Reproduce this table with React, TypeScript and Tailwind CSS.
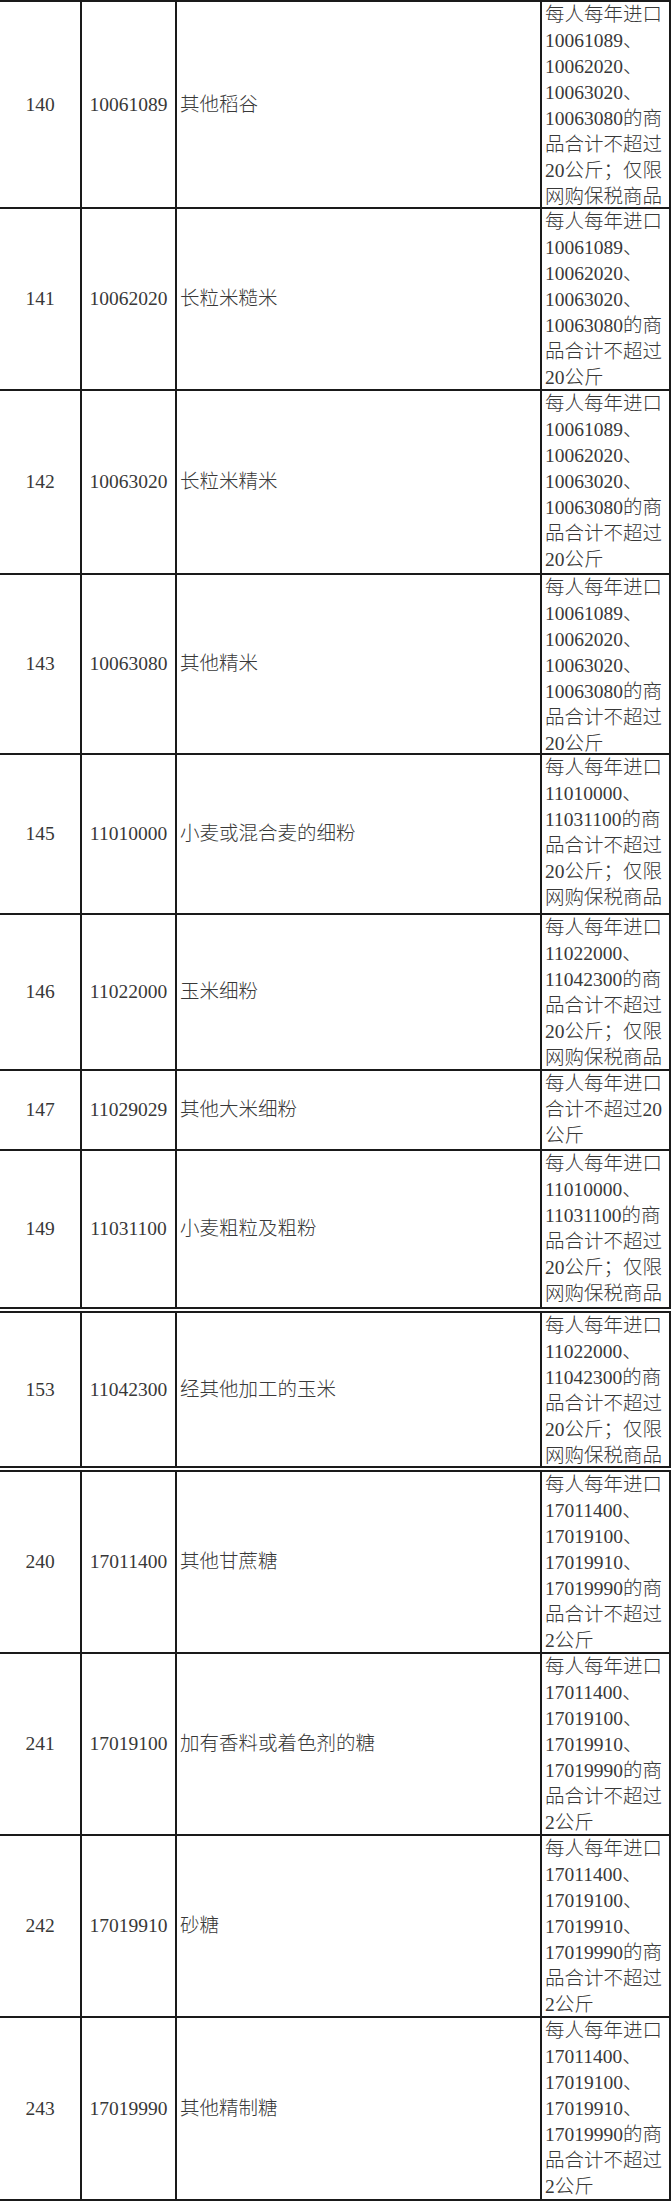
const limit20 = (codes: string[], last: string, tail: string[]) => [
  '每人每年进口',
  ...codes.map((c) => c + '、'),
  last + '的商',
  '品合计不超过',
  ...tail,
];

const rice = ['10061089', '10062020', '10063020'];
const flour1 = ['11010000'];
const flour2 = ['11022000'];
const sugar = ['17011400', '17019100', '17019910'];

type Row = {
  no: string;
  code: string;
  name: string;
  note: string[];
  h: string;
  double?: boolean;
};

const rows: Row[] = [
  { no: '140', code: '10061089', name: '其他稻谷', note: limit20(rice, '10063080', ['20公斤；仅限', '网购保税商品']), h: 'h-[207px]' },
  { no: '141', code: '10062020', name: '长粒米糙米', note: limit20(rice, '10063080', ['20公斤']), h: 'h-[182px]' },
  { no: '142', code: '10063020', name: '长粒米精米', note: limit20(rice, '10063080', ['20公斤']), h: 'h-[184px]' },
  { no: '143', code: '10063080', name: '其他精米', note: limit20(rice, '10063080', ['20公斤']), h: 'h-[180px]' },
  { no: '145', code: '11010000', name: '小麦或混合麦的细粉', note: limit20(flour1, '11031100', ['20公斤；仅限', '网购保税商品']), h: 'h-[160px]' },
  { no: '146', code: '11022000', name: '玉米细粉', note: limit20(flour2, '11042300', ['20公斤；仅限', '网购保税商品']), h: 'h-[156px]' },
  { no: '147', code: '11029029', name: '其他大米细粉', note: ['每人每年进口', '合计不超过20', '公斤'], h: 'h-[80px]' },
  { no: '149', code: '11031100', name: '小麦粗粒及粗粉', note: limit20(flour1, '11031100', ['20公斤；仅限', '网购保税商品']), h: 'h-[162px]', double: true },
  { no: '153', code: '11042300', name: '经其他加工的玉米', note: limit20(flour2, '11042300', ['20公斤；仅限', '网购保税商品']), h: 'h-[159px]', double: true },
  { no: '240', code: '17011400', name: '其他甘蔗糖', note: limit20(sugar, '17019990', ['2公斤']), h: 'h-[182px]' },
  { no: '241', code: '17019100', name: '加有香料或着色剂的糖', note: limit20(sugar, '17019990', ['2公斤']), h: 'h-[182px]' },
  { no: '242', code: '17019910', name: '砂糖', note: limit20(sugar, '17019990', ['2公斤']), h: 'h-[182px]' },
  { no: '243', code: '17019990', name: '其他精制糖', note: limit20(sugar, '17019990', ['2公斤']), h: 'h-[183px]' },
];

export default function App() {
  return (
    <div className="h-[2204px] w-[672px] bg-white font-[family-name:'Liberation_Serif','Noto_Sans_CJK_SC',serif] text-[19.5px] font-light text-[#383838]">
      <div className="w-[671px] border-t-2 border-[#1a1a1a]">
        {rows.map((r) => (
          <div
            key={r.no}
            className={`flex ${r.h} ${
              r.double ? 'border-b-[6px] border-double' : 'border-b-2'
            } border-[#1a1a1a]`}>
            <div className="flex w-[82px] shrink-0 items-center justify-center border-r-2 border-[#1a1a1a]">
              {r.no}
            </div>
            <div className="flex w-[95px] shrink-0 items-center justify-center border-r-2 border-[#1a1a1a]">
              {r.code}
            </div>
            <div className="flex w-[365px] shrink-0 items-center border-r-2 border-[#1a1a1a] pl-[3px]">
              {r.name}
            </div>
            <div className="w-[129px] shrink-0 overflow-hidden whitespace-nowrap border-r-2 border-[#1a1a1a] pl-[3px] leading-[26px]">
              {r.note.map((line, i) => (
                <div key={i}>{line}</div>
              ))}
            </div>
          </div>
        ))}
      </div>
    </div>
  );
}
